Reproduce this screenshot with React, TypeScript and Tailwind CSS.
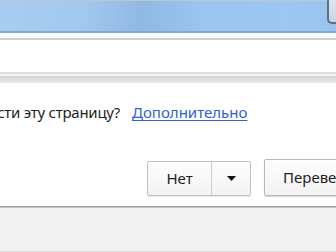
import React from "react";

export default function App() {
  return (
    <div
      className="w-[336px] h-[252px] overflow-hidden flex flex-col bg-white"
      style={{ fontFamily: '"Noto Sans", "Open Sans", sans-serif' }}
    >
      {/* title bar */}
      <div className="h-[1px] bg-[#b9c6d3] shrink-0" />
      <div className="h-[30px] shrink-0 flex justify-end bg-[linear-gradient(90deg,#a9cdf0_0%,#a2c8ee_25%,#8fb8e3_42%,#9bc5f0_60%,#9cc7f2_85%,#99c4ef_100%)]">
        <div className="w-[9px] h-[24px] -mt-[1px] border-l-2 border-b-2 border-[#5f6f82] rounded-bl-[5px] bg-[linear-gradient(180deg,#dfe7f0,#c9d5e2)]" />
      </div>
      <div className="h-[2px] shrink-0 bg-[#82a8d0]" />
      {/* toolbar */}
      <div className="h-[5px] shrink-0 bg-[#fbfbfb]" />
      <div className="h-[2px] shrink-0 bg-[#cfcfcf]" />
      <div className="h-[32px] shrink-0 bg-white" />
      <div className="h-[2px] shrink-0 bg-[#dedede]" />
      <div className="h-[2px] shrink-0 bg-[#f4f4f4]" />
      <div className="h-[7px] shrink-0 bg-[linear-gradient(180deg,#d3d3d3,#e9e9e9)]" />
      {/* infobar */}
      <div className="h-[123px] shrink-0 bg-white flex flex-col">
        <div className="mt-[19px] h-[20px] flex items-center text-[15px] leading-[20px] text-[#1e1e1e] whitespace-nowrap">
          <div className="w-[120px] shrink-0 overflow-hidden flex justify-end">
            <span className="shrink-0 tracking-[-0.25px]">Перевести эту страницу?</span>
          </div>
          <a className="ml-[12px] text-[#2f62d0] underline underline-offset-2 decoration-1">
            Дополнительно
          </a>
        </div>
        <div className="mt-[27px] flex items-start">
          <div className="ml-[147px] mt-[12px] h-[35px] w-[104px] shrink-0 flex border border-[#c3c3c3] rounded-[2px] bg-[linear-gradient(180deg,#fdfdfd,#f3f3f3)] shadow-[0_1px_0_#e6e6e6]">
            <div className="w-[64px] shrink-0 flex items-center justify-center text-[15px] text-[#222] border-r border-[#cdcdcd]">
              Нет
            </div>
            <div className="flex-1 flex items-center justify-center">
              <svg width="9" height="5" viewBox="0 0 9 5">
                <path d="M0 0H9L4.5 5Z" fill="#111" />
              </svg>
            </div>
          </div>
          <div className="ml-[13px] mt-[10px] h-[37px] w-[120px] shrink-0 flex items-center pl-[18px] border border-[#b9b9b9] rounded-[2px] bg-[linear-gradient(180deg,#fdfdfd,#f2f2f2)] shadow-[0_1px_1px_#d8d8d8] text-[15px] text-[#222] whitespace-nowrap">
            Перевести
          </div>
        </div>
      </div>
      {/* page */}
      <div className="h-[1px] shrink-0 bg-[#9f9f9f]" />
      <div className="h-[1px] shrink-0 bg-[#c4c4c4]" />
      <div className="flex-1 bg-[#f2f2f2] border-b border-[#dcdcdc]" />
    </div>
  );
}
